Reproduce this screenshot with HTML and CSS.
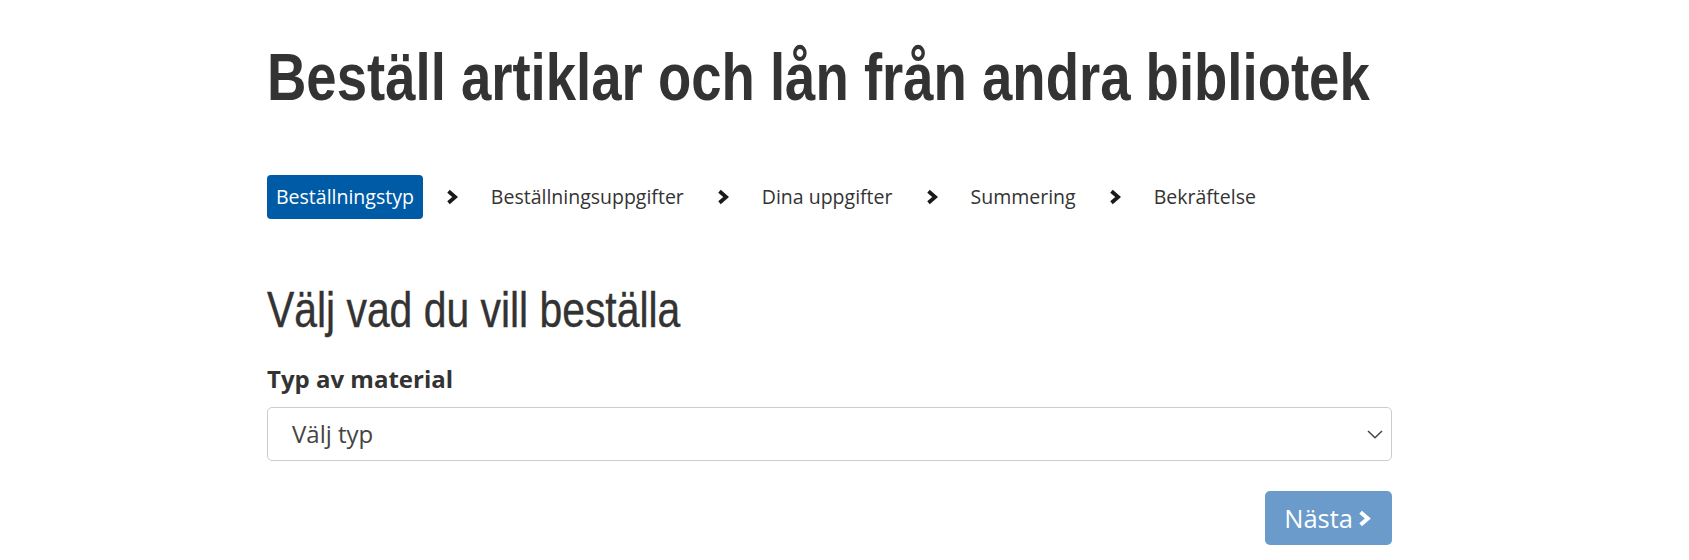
FILE: index.html
```html
<!DOCTYPE html>
<html lang="sv">
<head>
<meta charset="utf-8">
<title>Beställ artiklar och lån från andra bibliotek</title>
<link rel="stylesheet" href="styles.css">
</head>
<body>
<main class="page">
  <h1 class="title"><span class="narrow">Beställ artiklar och lån från andra bibliotek</span></h1>

  <ol class="steps">
    <li class="step step-active">Beställningstyp</li>
    <li class="sep"><svg viewBox="0 0 12 16" width="12" height="16"><path d="M2.5 2.2 L9.2 8 L2.5 13.8" fill="none" stroke="#1a1a1a" stroke-width="3.8"/></svg></li>
    <li class="step">Beställningsuppgifter</li>
    <li class="sep"><svg viewBox="0 0 12 16" width="12" height="16"><path d="M2.5 2.2 L9.2 8 L2.5 13.8" fill="none" stroke="#1a1a1a" stroke-width="3.8"/></svg></li>
    <li class="step">Dina uppgifter</li>
    <li class="sep"><svg viewBox="0 0 12 16" width="12" height="16"><path d="M2.5 2.2 L9.2 8 L2.5 13.8" fill="none" stroke="#1a1a1a" stroke-width="3.8"/></svg></li>
    <li class="step">Summering</li>
    <li class="sep"><svg viewBox="0 0 12 16" width="12" height="16"><path d="M2.5 2.2 L9.2 8 L2.5 13.8" fill="none" stroke="#1a1a1a" stroke-width="3.8"/></svg></li>
    <li class="step">Bekräftelse</li>
  </ol>

  <h2 class="subtitle"><span class="narrow">Välj vad du vill beställa</span></h2>

  <div class="field">
    <div class="label">Typ av material</div>
    <div class="select">
      <span class="select-text">Välj typ</span>
      <svg class="select-arrow" viewBox="0 0 16 9" width="16" height="9"><path d="M1 1 L8 7.8 L15 1" fill="none" stroke="#444" stroke-width="1.5"/></svg>
    </div>
  </div>

  <div class="actions">
    <div class="btn">
      <span>Nästa</span>
      <svg viewBox="0 0 13 17" width="13" height="17"><path d="M2.6 2.3 L9.8 8.5 L2.6 14.7" fill="none" stroke="#fff" stroke-width="4"/></svg>
    </div>
  </div>
</main>
</body>
</html>
```

FILE: styles.css
```css
html, body {
  margin: 0;
  padding: 0;
  background: #fff;
}

body {
  font-family: "Open Sans", "Liberation Sans", sans-serif;
  color: #333;
}

.page {
  width: 1125px;
  margin: 0 0 0 267px;
  padding-top: 41px;
  padding-bottom: 16px;
}

.title {
  margin: 0;
  font-family: "Liberation Sans", Arial, sans-serif;
  font-weight: 700;
  font-size: 66px;
  line-height: 72.6px;
  color: #333;
  white-space: nowrap;
}

.subtitle {
  margin: 64px 0 0 0;
  font-family: "Liberation Sans", Arial, sans-serif;
  font-weight: 400;
  font-size: 50px;
  line-height: 55px;
  color: #333;
  white-space: nowrap;
}

.narrow {
  display: inline-block;
  transform-origin: 0 50%;
}

.title .narrow {
  transform: scaleX(0.826);
}

.subtitle .narrow {
  transform: scaleX(0.817);
  -webkit-text-stroke: 0.4px #333;
}

.steps {
  list-style: none;
  margin: 61px 0 0 0;
  padding: 0;
  display: flex;
  align-items: center;
}

.step {
  font-size: 19.5px;
  line-height: 29px;
  padding: 7.5px 10px;
  border-radius: 4px;
  color: #333;
  white-space: nowrap;
}

.step-active {
  padding: 7.5px 9px;
  background: #005ba6;
  color: #fff;
}

.sep {
  display: flex;
  align-items: center;
  margin: 0 23px;
}

.sep svg {
  display: block;
}

.field {
  margin-top: 23px;
}

.label {
  font-weight: 700;
  font-size: 24px;
  line-height: 36px;
  color: #333;
}

.select {
  margin-top: 10.5px;
  box-sizing: border-box;
  height: 54px;
  border: 1px solid #ccc;
  border-radius: 5px;
  display: flex;
  align-items: center;
  justify-content: space-between;
  padding: 0 8px 0 24px;
  background: #fff;
}

.select-text {
  font-size: 24px;
  line-height: 32px;
  color: #444;
}

.select-arrow {
  display: block;
}

.actions {
  display: flex;
  justify-content: flex-end;
  margin-top: 30px;
}

.btn {
  box-sizing: border-box;
  height: 54px;
  display: flex;
  align-items: center;
  gap: 5px;
  padding: 0 21px 0 19px;
  background: #6a9bcb;
  border-radius: 5px;
  color: #fff;
  font-size: 25.5px;
  line-height: 32px;
}

.btn svg {
  display: block;
}
```
